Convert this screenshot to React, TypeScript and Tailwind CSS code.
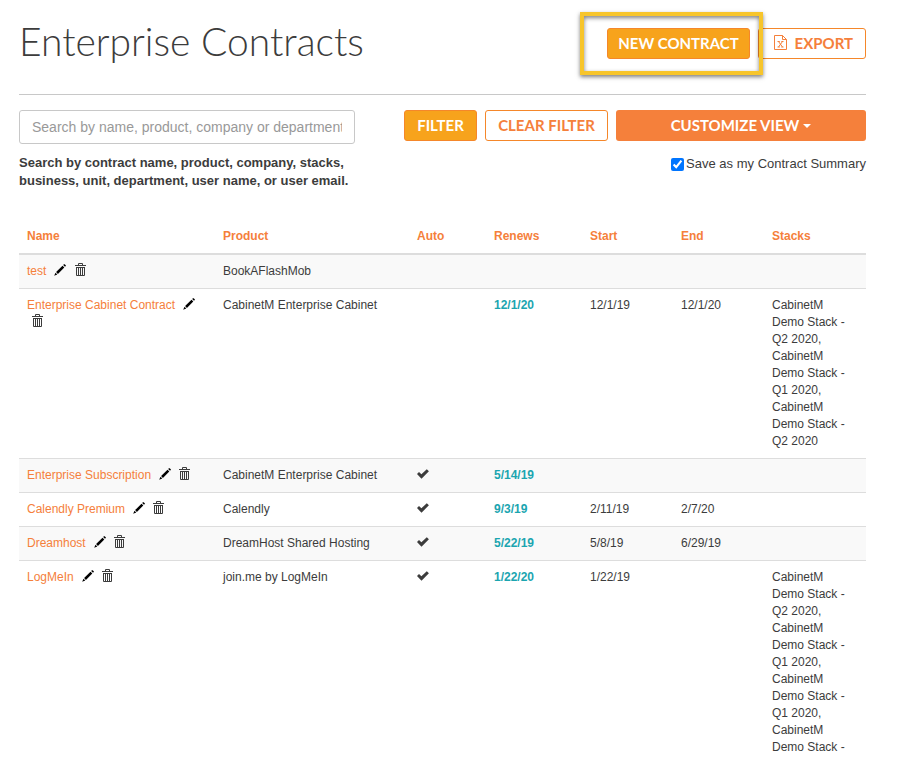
import { useState } from "react";

type Contract = {
  name: string;
  product: string;
  auto: boolean;
  renews: string;
  start: string;
  end: string;
  stacks: string[];
};

const columns = [
  { name: "Name", width: "w-[196px]" },
  { name: "Product", width: "w-[194px]" },
  { name: "Auto", width: "w-[77px]" },
  { name: "Renews", width: "w-[96px]" },
  { name: "Start", width: "w-[91px]" },
  { name: "End", width: "w-[91px]" },
  { name: "Stacks", width: "w-[102px]" },
];

const contracts: Contract[] = [
  { name: "test", product: "BookAFlashMob", auto: false, renews: "", start: "", end: "", stacks: [] },
  {
    name: "Enterprise Cabinet Contract",
    product: "CabinetM Enterprise Cabinet",
    auto: false,
    renews: "12/1/20",
    start: "12/1/19",
    end: "12/1/20",
    stacks: ["CabinetM Demo Stack - Q2 2020", "CabinetM Demo Stack - Q1 2020", "CabinetM Demo Stack - Q2 2020"],
  },
  { name: "Enterprise Subscription", product: "CabinetM Enterprise Cabinet", auto: true, renews: "5/14/19", start: "", end: "", stacks: [] },
  { name: "Calendly Premium", product: "Calendly", auto: true, renews: "9/3/19", start: "2/11/19", end: "2/7/20", stacks: [] },
  { name: "Dreamhost", product: "DreamHost Shared Hosting", auto: true, renews: "5/22/19", start: "5/8/19", end: "6/29/19", stacks: [] },
  {
    name: "LogMeIn",
    product: "join.me by LogMeIn",
    auto: true,
    renews: "1/22/20",
    start: "1/22/19",
    end: "",
    stacks: [
      "CabinetM Demo Stack - Q2 2020",
      "CabinetM Demo Stack - Q1 2020",
      "CabinetM Demo Stack - Q1 2020",
      "CabinetM Demo Stack -",
    ],
  },
];

function PencilIcon() {
  return (
    <svg viewBox="0 0 12 12" className="block h-3 w-3" fill="currentColor" aria-hidden="true">
      <path d="M9.200 1 9.900.3Q10.300 0 10.700.3L11.700 1.200Q12.100 1.700 11.700 2.100L11 2.800ZM8.500 1.700 10.300 3.500 3.900 9.900 2.100 8.100ZM1.500 8.700 3.300 10.500 .2 11.800Z" />
    </svg>
  );
}

function TrashIcon() {
  return (
    <svg viewBox="0 0 11 13" className="block h-[13px] w-[11px]" fill="none" stroke="currentColor" aria-hidden="true">
      <path d="M0 2.500H11M3.500 2.500V.5H7.500V2.500M1.500 4V12.500H9.500V4M1 4.500H10M3.500 5V12M5.500 5V12M7.500 5V12" />
    </svg>
  );
}

function CheckIcon() {
  return (
    <svg viewBox="0 0 12 10" className="h-[10px] w-3" fill="currentColor" role="img" aria-label="Yes">
      <path d="M0 5 2 3 4.400 5.200 9.800.2 11.900 2.300 4.500 9.700Z" />
    </svg>
  );
}

function ExcelIcon() {
  return (
    <svg viewBox="0 0 13 15" className="h-[15px] w-[13px]" fill="none" stroke="currentColor" aria-hidden="true">
      <path d="M.5.5H8.500L12.500 4.500V14.500H.5ZM8.500.5V4.500H12.500" />
      <path d="M4.500 6.500 8.500 12M8.500 6.500 4.500 12M3.500 6.500H5.800M7.300 6.500H9.500M3.500 12H5.800M7.300 12H9.500" />
    </svg>
  );
}

export default function App() {
  const [search, setSearch] = useState("");
  const [saveSummary, setSaveSummary] = useState(true);

  return (
    <main className="bg-white pt-5 pr-[34px] pl-[19px] font-['Liberation_Sans',Arial,sans-serif] text-[#3c3c3c]">
      <header className="flex h-[75px] items-start justify-between border-b border-[#c8c8c8]">
        <h1 className="font-[Lato,sans-serif] text-[39px] leading-[42px] font-light">Enterprise Contracts</h1>
        <div className="flex gap-2 pt-2 font-[Lato,sans-serif] text-[15px] leading-[20px] font-bold">
          <div className="relative z-10">
            <button className="h-[31px] w-[143px] rounded-[3px] border border-[#f5872a] bg-[#f7a31c] pb-[2px] text-white">
              NEW CONTRACT
            </button>
            {/* Callout frame around the button */}
            <div className="pointer-events-none absolute -top-4 -right-[13px] -bottom-4 -left-[27px] border-4 border-[#f7c52b] shadow-[0_2px_4px_rgba(0,0,0,0.5),inset_0_2px_4px_rgba(0,0,0,0.5)]" />
          </div>
          <button className="flex h-[31px] w-[108px] items-center justify-end gap-2 rounded-[3px] border border-[#f5872a] pr-3 pb-[2px] text-[#f5803b]">
            <ExcelIcon />
            EXPORT
          </button>
        </div>
      </header>

      <section className="flex items-start justify-between pt-[15px]">
        <div className="w-[336px]">
          <input
            type="text"
            aria-label="Search contracts"
            placeholder="Search by name, product, company or department"
            value={search}
            onChange={(e) => setSearch(e.target.value)}
            className="block h-[34px] w-full rounded-[3px] border border-[#c8c8c8] px-3 text-sm placeholder:text-[#999]"
          />
          <p className="pt-[10px] text-[13px] leading-[18px] font-bold">
            Search by contract name, product, company, stacks, business, unit, department, user name, or user email.
          </p>
        </div>
        <div className="flex gap-2 font-[Lato,sans-serif] text-[15px] leading-[20px] font-bold">
          <button className="h-[31px] w-[73px] rounded-[3px] border border-[#f5872a] bg-[#f7a31c] pb-[2px] text-white">FILTER</button>
          <button className="h-[31px] w-[123px] rounded-[3px] border border-[#f5872a] pb-[2px] text-[#f5803b]">CLEAR FILTER</button>
          <div className="flex w-[250px] flex-col items-end">
            <button className="flex h-[31px] w-full items-center justify-center gap-1 rounded-[3px] bg-[#f5803b] pb-[2px] text-white">
              CUSTOMIZE VIEW
              <svg viewBox="0 0 8 4" className="mt-[2px] h-1 w-2" fill="currentColor" aria-hidden="true">
                <path d="M0 0H8L4 4Z" />
              </svg>
            </button>
            <label className="flex items-center gap-[2px] pt-[13px] font-['Liberation_Sans',Arial,sans-serif] text-[13px] leading-[20px] font-normal">
              <input
                type="checkbox"
                checked={saveSummary}
                onChange={(e) => setSaveSummary(e.target.checked)}
                className="h-[13px] w-[13px] accent-[#0075ff]"
              />
              Save as my Contract Summary
            </label>
          </div>
        </div>
      </section>

      <table className="mt-[30px] w-full table-fixed border-collapse text-left text-xs leading-[17px]">
        <thead>
          <tr className="border-b-2 border-[#ddd] text-[#f5803b]">
            {columns.map((column) => (
              <th key={column.name} className={`${column.width} p-2 font-bold`}>
                {column.name}
              </th>
            ))}
          </tr>
        </thead>
        <tbody>
          {contracts.map((contract) => (
            <tr key={contract.name} className="border-b border-[#ddd] align-top odd:bg-[#f9f9f9] last:border-b-0">
              <td className="p-2">
                <a href="#" className="text-[#f5803b]">
                  {contract.name}
                </a>
                <button aria-label={`Edit ${contract.name}`} className="ml-2 inline-flex h-4 items-start pt-px align-top text-black">
                  <PencilIcon />
                </button>{" "}
                <button aria-label={`Delete ${contract.name}`} className="ml-[5px] inline-flex h-4 items-start align-top">
                  <TrashIcon />
                </button>
              </td>
              <td className="p-2">{contract.product}</td>
              <td className="p-2">
                {contract.auto && (
                  <span className="flex h-[14px] items-center">
                    <CheckIcon />
                  </span>
                )}
              </td>
              <td className="p-2 font-bold text-[#1ba5b0]">{contract.renews}</td>
              <td className="p-2">{contract.start}</td>
              <td className="p-2">{contract.end}</td>
              <td className="p-2">{contract.stacks.join(", ")}</td>
            </tr>
          ))}
        </tbody>
      </table>
    </main>
  );
}
